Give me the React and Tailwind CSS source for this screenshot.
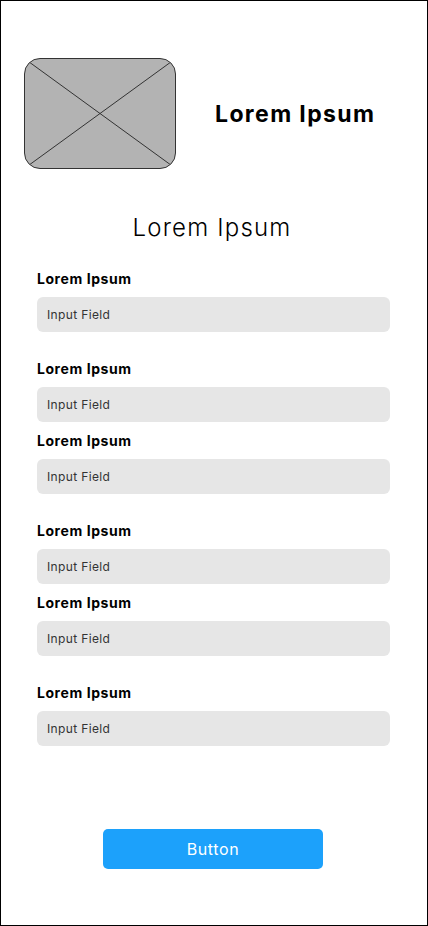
const FIELDS = [
  { id: 1, gap: 'mt-[27px]' },
  { id: 2, gap: 'mt-[28px]' },
  { id: 3, gap: 'mt-[10px]' },
  { id: 4, gap: 'mt-[28px]' },
  { id: 5, gap: 'mt-[10px]' },
  { id: 6, gap: 'mt-[28px]' },
];

const Placeholder = () => (
  <div className="w-[152px] h-[111px] rounded-[16px] border border-[#333] bg-[#b3b3b3] overflow-hidden">
    <svg width="150" height="109" viewBox="0 0 150 109" className="block">
      <line x1="0" y1="0" x2="150" y2="109" stroke="#333" strokeWidth="1" />
      <line x1="150" y1="0" x2="0" y2="109" stroke="#333" strokeWidth="1" />
    </svg>
  </div>
);

export default function App() {
  return (
    <div
      className="w-[428px] h-[926px] border border-black bg-white flex flex-col"
      style={{ fontFamily: 'Inter, "Liberation Sans", sans-serif' }}
    >
      {/* Header */}
      <div className="flex items-center pt-[57px] pl-[23px]">
        <Placeholder />
        <h2 className="ml-[39px] text-[23px] leading-[28px] font-bold tracking-[0.06em] text-black">Lorem Ipsum</h2>
      </div>

      <h1 className="mt-[44px] text-center text-[24px] leading-[30px] font-light tracking-[0.05em] text-black pr-[4px]">Lorem Ipsum</h1>

      {/* Form */}
      <div className="flex flex-col px-[36px]">
        {FIELDS.map((f) => (
          <div key={f.id} className={f.gap}>
            <label className="block text-[14px] leading-[18px] font-bold tracking-[0.04em] text-black">Lorem Ipsum</label>
            <div className="mt-[9px] w-[353px] h-[35px] rounded-[6px] bg-[#e6e6e6] flex items-center px-[10px]">
              <span className="text-[12px] tracking-[0.03em] text-[#333]">Input Field</span>
            </div>
          </div>
        ))}
      </div>

      <div className="mt-[83px] flex justify-center pr-[2px]">
        <button className="w-[220px] h-[40px] rounded-[5px] bg-[#1ca1fb] text-white text-[16px] tracking-[0.04em]">
          Button
        </button>
      </div>
    </div>
  );
}
